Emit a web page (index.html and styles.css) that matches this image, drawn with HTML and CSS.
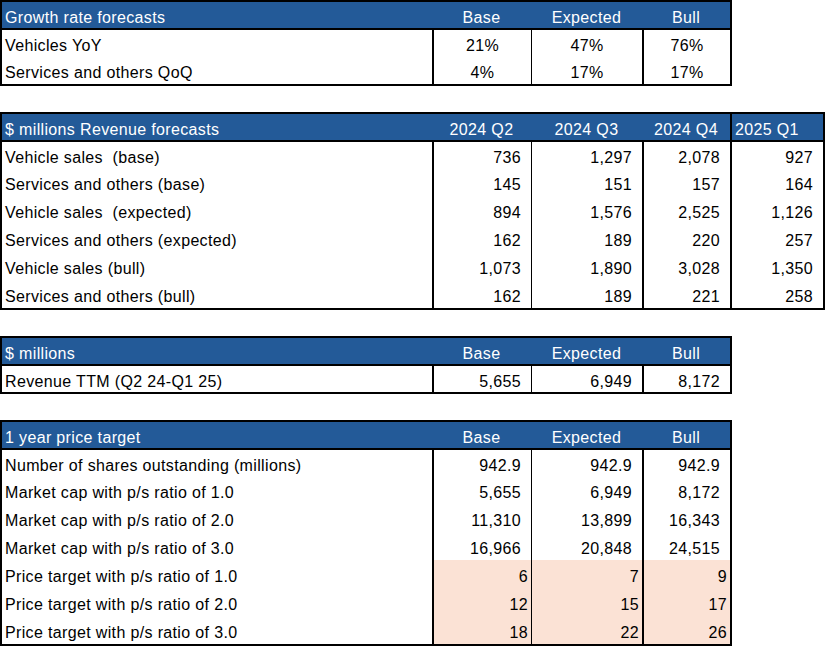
FILE: index.html
```html
<!DOCTYPE html>
<html>
<head>
<meta charset="utf-8">
<link rel="stylesheet" href="styles.css">
</head>
<body>
<div class="sheet">
  <div class="tbl">
    <div class="row head"><div class="cell lbl">Growth rate forecasts</div><div class="cell c">Base</div><div class="cell c">Expected</div><div class="cell c">Bull</div></div>
    <div class="row"><div class="cell lbl">Vehicles YoY</div><div class="cell c b2">21%</div><div class="cell c b1">47%</div><div class="cell c b2">76%</div></div>
    <div class="row"><div class="cell lbl">Services and others QoQ</div><div class="cell c b2">4%</div><div class="cell c b1">17%</div><div class="cell c b2">17%</div></div>
  </div>

  <div class="tbl wide">
    <div class="row head"><div class="cell lbl">$ millions Revenue forecasts</div><div class="cell c">2024 Q2</div><div class="cell c">2024 Q3</div><div class="cell c">2024 Q4</div><div class="cell lft b2">2025 Q1</div></div>
    <div class="row"><div class="cell lbl">Vehicle sales&nbsp; (base)</div><div class="cell r b2">736</div><div class="cell r b1">1,297</div><div class="cell r b2">2,078</div><div class="cell r b2">927</div></div>
    <div class="row"><div class="cell lbl">Services and others (base)</div><div class="cell r b2">145</div><div class="cell r b1">151</div><div class="cell r b2">157</div><div class="cell r b2">164</div></div>
    <div class="row"><div class="cell lbl">Vehicle sales&nbsp; (expected)</div><div class="cell r b2">894</div><div class="cell r b1">1,576</div><div class="cell r b2">2,525</div><div class="cell r b2">1,126</div></div>
    <div class="row"><div class="cell lbl">Services and others (expected)</div><div class="cell r b2">162</div><div class="cell r b1">189</div><div class="cell r b2">220</div><div class="cell r b2">257</div></div>
    <div class="row"><div class="cell lbl">Vehicle sales (bull)</div><div class="cell r b2">1,073</div><div class="cell r b1">1,890</div><div class="cell r b2">3,028</div><div class="cell r b2">1,350</div></div>
    <div class="row"><div class="cell lbl">Services and others (bull)</div><div class="cell r b2">162</div><div class="cell r b1">189</div><div class="cell r b2">221</div><div class="cell r b2">258</div></div>
  </div>

  <div class="tbl">
    <div class="row head"><div class="cell lbl">$ millions</div><div class="cell c">Base</div><div class="cell c">Expected</div><div class="cell c">Bull</div></div>
    <div class="row"><div class="cell lbl">Revenue TTM (Q2 24-Q1 25)</div><div class="cell r b2">5,655</div><div class="cell r b1">6,949</div><div class="cell r b2">8,172</div></div>
  </div>

  <div class="tbl">
    <div class="row head"><div class="cell lbl">1 year price target</div><div class="cell c">Base</div><div class="cell c">Expected</div><div class="cell c">Bull</div></div>
    <div class="row"><div class="cell lbl">Number of shares outstanding (millions)</div><div class="cell r b2">942.9</div><div class="cell r b1">942.9</div><div class="cell r b2">942.9</div></div>
    <div class="row"><div class="cell lbl">Market cap with p/s ratio of 1.0</div><div class="cell r b2">5,655</div><div class="cell r b1">6,949</div><div class="cell r b2">8,172</div></div>
    <div class="row"><div class="cell lbl">Market cap with p/s ratio of 2.0</div><div class="cell r b2">11,310</div><div class="cell r b1">13,899</div><div class="cell r b2">16,343</div></div>
    <div class="row"><div class="cell lbl">Market cap with p/s ratio of 3.0</div><div class="cell r b2">16,966</div><div class="cell r b1">20,848</div><div class="cell r b2">24,515</div></div>
    <div class="row"><div class="cell lbl">Price target with p/s ratio of 1.0</div><div class="cell r b2 pk">6</div><div class="cell r b1 pk">7</div><div class="cell r b2 pk">9</div></div>
    <div class="row"><div class="cell lbl">Price target with p/s ratio of 2.0</div><div class="cell r b2 pk">12</div><div class="cell r b1 pk">15</div><div class="cell r b2 pk">17</div></div>
    <div class="row"><div class="cell lbl">Price target with p/s ratio of 3.0</div><div class="cell r b2 pk">18</div><div class="cell r b1 pk">22</div><div class="cell r b2 pk">26</div></div>
  </div>
</div>
</body>
</html>
```

FILE: styles.css
```css
html, body {
  margin: 0;
  padding: 0;
  background: #ffffff;
}

body {
  font-family: "Liberation Sans", Arial, sans-serif;
  font-size: 16px;
  letter-spacing: 0.35px;
  color: #000000;
}

.sheet {
  display: flex;
  flex-direction: column;
  align-items: flex-start;
  gap: 26px;
}

.tbl {
  border: 2px solid #000000;
  width: 732px;
  box-sizing: border-box;
}

.tbl.wide {
  width: 825px;
}

.row {
  display: grid;
  grid-template-columns: 430px 99px 111px 88px;
  height: 28px;
  box-sizing: border-box;
}

.wide .row {
  grid-template-columns: 430px 99px 111px 88px 93px;
}

.row.head {
  background: #235a98;
  color: #ffffff;
  border-bottom: 2px solid #000000;
}

.row.head + .row {
  height: 26px;
}

.cell {
  display: flex;
  align-items: center;
  padding-top: 5px;
  box-sizing: border-box;
  white-space: nowrap;
  overflow: hidden;
}

.lbl {
  padding-left: 3px;
}

.lft {
  padding-left: 3px;
}

.c {
  justify-content: center;
}

.r {
  justify-content: flex-end;
  padding-right: 10px;
}

.b2 {
  border-left: 2px solid #000000;
}

.b1 {
  border-left: 1px solid #000000;
}

.pk {
  background: #fbe2d5;
  padding-right: 3px;
}
```
